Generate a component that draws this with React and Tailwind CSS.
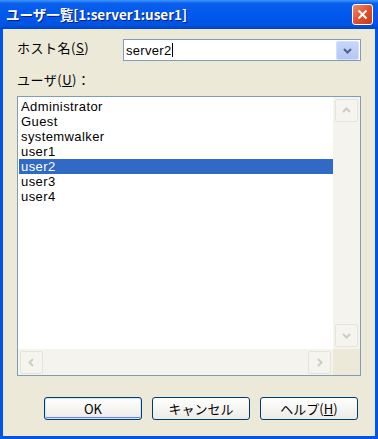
import React from "react";

const font = { fontFamily: '"Noto Sans CJK JP", "Noto Sans", sans-serif' };
const latin = { fontFamily: '"Liberation Sans", "Noto Sans CJK JP", sans-serif' };

function Chevron({ dir = "down", color = "#4D6185", size = 9 }) {
  const paths = {
    down: "M1 3 L4.5 6.5 L8 3",
    up: "M1 6 L4.5 2.5 L8 6",
    left: "M6 1 L2.5 4.5 L6 8",
    right: "M3 1 L6.5 4.5 L3 8",
  };
  return (
    <svg width={size} height={size} viewBox="0 0 9 9">
      <path d={paths[dir]} fill="none" stroke={color} strokeWidth="2" />
    </svg>
  );
}

function ScrollBtn({ dir }) {
  return (
    <div className="w-[23px] h-[23px] flex items-center justify-center rounded-[2px] border border-[#E6E4DA] bg-[#F5F4EF]">
      <Chevron dir={dir} color="#CFCDC2" />
    </div>
  );
}

function Button({ children, isDefault }) {
  return (
    <div
      className={
        "w-[98px] h-[23px] rounded-[3px] border border-[#003C74] flex items-center justify-center text-[13px] leading-none text-black bg-gradient-to-b from-[#FFFFFF] to-[#ECEBE6] " +
        (isDefault ? "shadow-[inset_0_0_0_1px_#CEE7FF,inset_0_-1px_0_1px_#6982EE]" : "")
      }
      style={font}
    >
      {children}
    </div>
  );
}

export default function App() {
  const users = ["Administrator", "Guest", "systemwalker", "user1", "user2", "user3", "user4"];
  return (
    <div className="w-[378px] h-[439px] bg-[#0055E5] flex flex-col" style={font}>
      <div className="h-[29px] flex items-center justify-between pl-[6px] pr-[5px] bg-[linear-gradient(to_bottom,#3D95FF_0%,#0A5FEA_12%,#0058EE_50%,#0054E3_85%,#0045C8_100%)]">
        <span className="text-white font-bold text-[13.5px] leading-none [text-shadow:1px_1px_0_#0A1E7A]">
          ユーザ一覧[1:server1:user1]
        </span>
        <div className="w-[21px] h-[21px] rounded-[3px] border border-white bg-gradient-to-br from-[#EE8A6A] via-[#E0522D] to-[#C7391A] flex items-center justify-center">
          <svg width="11" height="11" viewBox="0 0 11 11">
            <path d="M1.5 1.5 L9.5 9.5 M9.5 1.5 L1.5 9.5" stroke="white" strokeWidth="2" />
          </svg>
        </div>
      </div>
      <div className="flex-1 mx-[3px] mb-[3px] bg-[#ECE9D8] flex flex-col pl-[14px]">
        <div className="flex items-start mt-[10px]">
          <div className="w-[106px] pt-[2px] text-[13px] tracking-[0.5px] leading-[14px] text-black">
            ホスト名(<span className="underline">S</span>)
          </div>
          <div className="w-[238px] h-[22px] border border-[#7F9DB9] bg-white flex items-center justify-between pr-[1px]">
            <div className="flex items-center pl-[2px] text-[13px] tracking-[0.3px] text-black leading-none" style={latin}>
              server2<span className="inline-block w-[1px] h-[14px] bg-black ml-[1px]"></span>
            </div>
            <div className="w-[23px] h-[19px] rounded-[2px] bg-gradient-to-b from-[#C6D5FC] to-[#B4C8F6] border border-[#D4DEF8] flex items-center justify-center">
              <Chevron dir="down" color="#4D6185" />
            </div>
          </div>
        </div>
        <div className="mt-[12px] text-[13px] tracking-[0.5px] leading-[14px] text-black">
          ユーザ(<span className="underline">U</span>)：
        </div>
        <div className="mt-[9px] w-[344px] h-[280px] border border-[#7F9DB9] bg-white flex flex-col">
          <div className="flex-1 flex">
            <div className="flex-1 pt-[2px] pl-[1px]">
              {users.map((u) => (
                <div
                  key={u}
                  className={
                    "h-[15px] pl-[2px] text-[13px] tracking-[0.4px] leading-[16px] " +
                    (u === "user2" ? "bg-[#316AC5] text-white" : "text-black")
                  }
                  style={latin}
                >
                  {u}
                </div>
              ))}
            </div>
            <div className="w-[27px] bg-[#F4F3EE] flex flex-col justify-between items-center py-[2px]">
              <ScrollBtn dir="up" />
              <ScrollBtn dir="down" />
            </div>
          </div>
          <div className="h-[26px] flex">
            <div className="flex-1 bg-[#F4F3EE] flex justify-between items-center px-[2px]">
              <ScrollBtn dir="left" />
              <ScrollBtn dir="right" />
            </div>
            <div className="w-[27px] bg-[#ECE9D8]"></div>
          </div>
        </div>
        <div className="mt-[21px] flex justify-end gap-[10px] pr-[17px]">
          <Button isDefault>OK</Button>
          <Button>キャンセル</Button>
          <Button>
            <span>
              ヘルプ(<span className="underline">H</span>)
            </span>
          </Button>
        </div>
      </div>
    </div>
  );
}
